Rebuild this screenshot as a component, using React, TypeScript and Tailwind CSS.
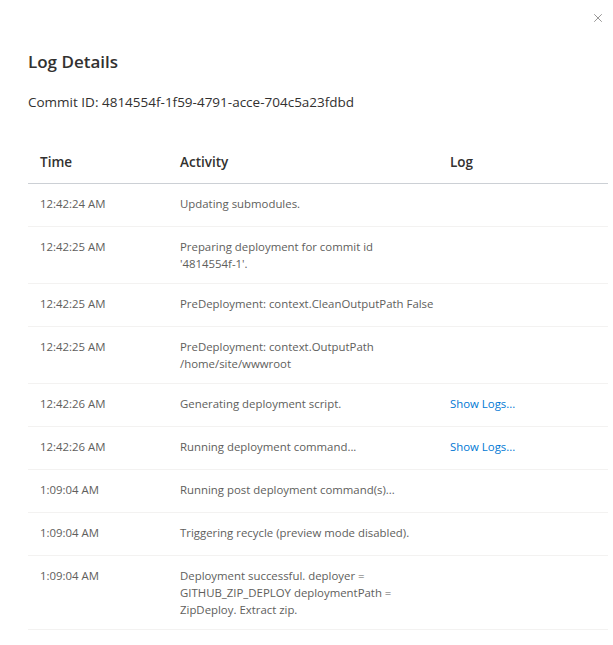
import { X } from 'lucide-react';

type Row = { time: string; activity: string[]; log?: boolean };

const ROWS: Row[] = [
  { time: '12:42:24 AM', activity: ['Updating submodules.'] },
  { time: '12:42:25 AM', activity: ['Preparing deployment for commit id', "'4814554f-1'."] },
  { time: '12:42:25 AM', activity: ['PreDeployment: context.CleanOutputPath False'] },
  { time: '12:42:25 AM', activity: ['PreDeployment: context.OutputPath', '/home/site/wwwroot'] },
  { time: '12:42:26 AM', activity: ['Generating deployment script.'], log: true },
  { time: '12:42:26 AM', activity: ['Running deployment command...'], log: true },
  { time: '1:09:04 AM', activity: ['Running post deployment command(s)...'] },
  { time: '1:09:04 AM', activity: ['Triggering recycle (preview mode disabled).'] },
  {
    time: '1:09:04 AM',
    activity: ['Deployment successful. deployer =', 'GITHUB_ZIP_DEPLOY deploymentPath =', 'ZipDeploy. Extract zip.'],
  },
];

export default function App() {
  return (
    <div className="relative min-h-[645px] w-[613px] overflow-hidden bg-white font-['Open_Sans',sans-serif] text-[#323130]">
      <button className="absolute right-[6px] top-[9px] p-0.5 text-[#605e5c]" aria-label="Close">
        <X size={14} strokeWidth={1.1} />
      </button>

      <div className="pl-7 pt-[46px]">
        <h2 className="text-[17px] font-semibold leading-[32px]">Log Details</h2>
        <p className="mt-[14px] text-[13.5px] leading-5">Commit ID: 4814554f-1f59-4791-acce-704c5a23fdbd</p>

        <div className="mt-[30px] w-[580px]">
          <div className="grid h-[42px] grid-cols-[140px_270px_1fr] items-center border-b border-[#ccd0d5] text-[13.5px] font-semibold">
            <div className="px-3">Time</div>
            <div className="px-3">Activity</div>
            <div className="px-3">Log</div>
          </div>
          {ROWS.map((r, i) => (
            <div
              key={i}
              className="grid min-h-[43px] grid-cols-[140px_270px_1fr] border-b border-[#f3f2f1] py-[11px] text-[11.4px] leading-[17px] text-[#605e5c]"
            >
              <div className="px-3">{r.time}</div>
              <div className="px-3">
                {r.activity.map((line) => (
                  <div key={line} className="whitespace-nowrap">{line}</div>
                ))}
              </div>
              <div className="px-3">
                {r.log && <a className="cursor-pointer text-[#0078d4]">Show Logs...</a>}
              </div>
            </div>
          ))}
        </div>
      </div>
    </div>
  );
}
